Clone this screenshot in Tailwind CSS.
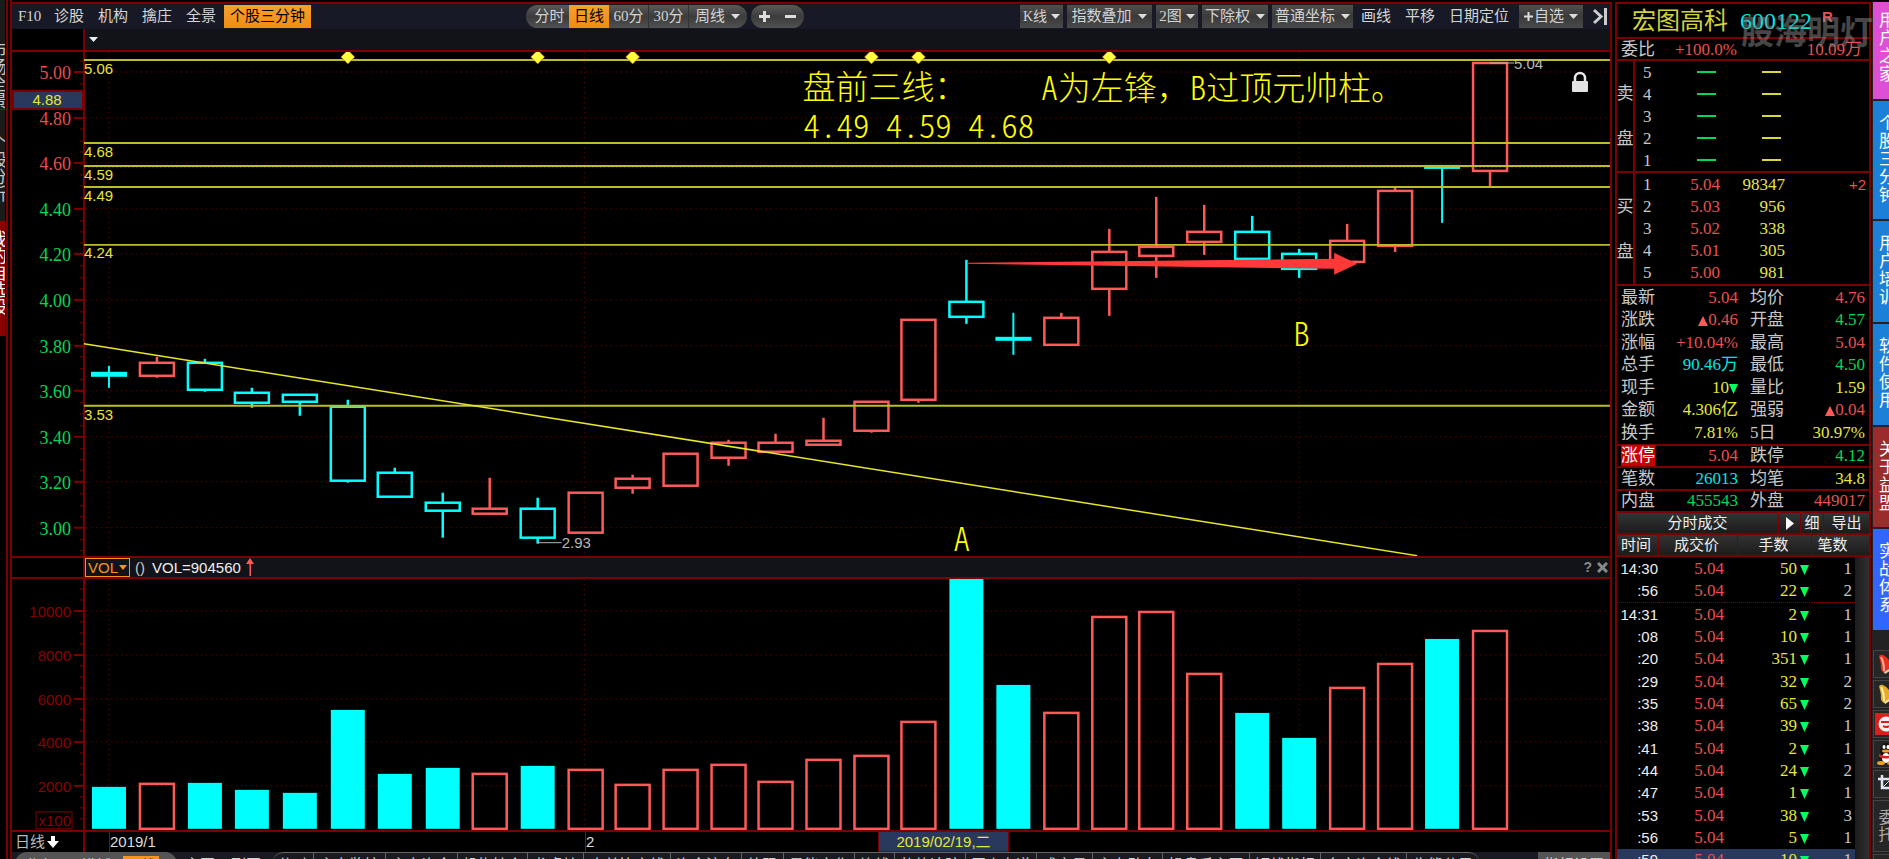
<!DOCTYPE html>
<html lang="zh-CN">
<head>
<meta charset="utf-8">
<title>宏图高科 600122</title>
<script src="https://cdn.jsdelivr.net/npm/@tailwindcss/browser@4"></script>
</head>
<body class="bg-black overflow-hidden">
<div class="flex h-screen overflow-hidden bg-black text-[15px] leading-none text-[#c8c8c8] font-['Liberation_Serif','Noto_Sans_CJK_SC',serif]">

  <!-- left navigation, scrolled mostly out of the window -->
  <nav class="flex w-3 shrink-0 flex-col border-r-2 border-[#7d0000] bg-black">
    <div class="flex h-full w-2 flex-col border-r-2 border-[#7d0000]">
      <a href="#" class="flex h-[110px] w-[5px] justify-end overflow-hidden border-b border-[#900000] bg-[#1b1b1b] pt-2 text-[17px] text-[#c8c8c8] [writing-mode:vertical-rl] items-start">市场全景</a>
      <a href="#" class="h-[112px] w-[5px] overflow-hidden border-b border-[#900000] bg-[#1b1b1b] pt-6 text-[17px] [writing-mode:vertical-rl]">个股分析</a>
      <a href="#" class="h-[114px] w-[5px] overflow-hidden bg-[#8a0000] pt-2 text-[17px] text-white [writing-mode:vertical-rl]">我的自选股</a>
    </div>
  </nav>

  <main class="flex min-w-0 flex-1 flex-col border-r-2 border-t-2 border-[#7d0000] mt-[2px]">
    <!-- toolbar -->
    <div class="flex h-[25px] shrink-0 items-center bg-[#171a26] text-[#d4d4d4]">
      <div class="flex items-center gap-[14px] pl-[6px]">
        <button class="w-[22px]">F10</button><button>诊股</button><button>机构</button><button>擒庄</button><button>全景</button>
        <button class="-ml-[6px] h-[23px] w-[87px] bg-linear-to-b from-[#f7a030] to-[#f08c10] text-black">个股三分钟</button>
      </div>
      <div class="ml-[215px] flex h-[23px] items-center overflow-hidden rounded-full bg-linear-to-b from-[#5a5a5a] via-[#3c3c3c] to-[#505050]">
        <button class="h-full w-[43px] pl-1">分时</button>
        <button class="h-full w-[40px] bg-linear-to-b from-[#f7a030] to-[#f08c10] text-black">日线</button>
        <button class="h-full w-[40px] border-r border-[#333]">60分</button>
        <button class="h-full w-[40px] border-r border-[#333]">30分</button>
        <button class="flex h-full w-[58px] items-center gap-[6px] pl-[6px]">周线<svg width="9" height="6"><path d="M0 0h9L4.500 5z" fill="#ddd"/></svg></button>
      </div>
      <div class="ml-1 flex h-[23px] w-[53px] items-center justify-around overflow-hidden rounded-full bg-linear-to-b from-[#5a5a5a] via-[#3c3c3c] to-[#505050]">
        <button aria-label="放大"><svg width="11" height="11"><path d="M5.500 0v11M0 5.500h11" stroke="#ddd" stroke-width="3"/></svg></button>
        <button aria-label="缩小"><svg width="11" height="11"><path d="M0 5.500h11" stroke="#ddd" stroke-width="3"/></svg></button>
      </div>
      <div class="ml-auto flex h-[23px] items-center gap-1 pr-[1px]">
        <button class="flex h-full w-[43px] items-center justify-center gap-1 bg-linear-to-b from-[#505050] via-[#3a3a3a] to-[#4a4a4a] text-[14px]">K线<svg width="9" height="6"><path d="M0 0h9L4.500 5z" fill="#ddd"/></svg></button>
        <button class="flex h-full w-[85px] items-center justify-center gap-[7px] bg-linear-to-b from-[#505050] via-[#3a3a3a] to-[#4a4a4a]">指数叠加<svg width="9" height="6"><path d="M0 0h9L4.500 5z" fill="#ddd"/></svg></button>
        <button class="flex h-full w-[42px] items-center justify-center gap-1 bg-linear-to-b from-[#505050] via-[#3a3a3a] to-[#4a4a4a]">2图<svg width="9" height="6"><path d="M0 0h9L4.500 5z" fill="#ddd"/></svg></button>
        <button class="flex h-full w-[66px] items-center justify-center gap-[6px] bg-linear-to-b from-[#505050] via-[#3a3a3a] to-[#4a4a4a]">下除权<svg width="9" height="6"><path d="M0 0h9L4.500 5z" fill="#ddd"/></svg></button>
        <button class="flex h-full w-[81px] items-center justify-center gap-[6px] bg-linear-to-b from-[#505050] via-[#3a3a3a] to-[#4a4a4a]">普通坐标<svg width="9" height="6"><path d="M0 0h9L4.500 5z" fill="#ddd"/></svg></button>
        <button class="ml-1">画线</button>
        <button class="ml-[10px]">平移</button>
        <button class="ml-[10px]">日期定位</button>
        <button class="ml-[6px] flex h-full w-[64px] items-center justify-center gap-[5px] bg-linear-to-b from-[#505050] via-[#3a3a3a] to-[#4a4a4a]"><span class="flex items-center gap-[1px]"><svg width="9" height="9"><path d="M4.500 0v9M0 4.500h9" stroke="#ddd" stroke-width="2"/></svg>自选</span><svg width="9" height="6"><path d="M0 0h9L4.500 5z" fill="#ddd"/></svg></button>
        <button class="ml-[6px]" aria-label="展开"><svg width="16" height="17"><path d="M1 2l7 6.500L1 15" fill="none" stroke="#ccc" stroke-width="3"/><path d="M12.500 0v17" stroke="#ccc" stroke-width="3"/></svg></button>
      </div>
    </div>
    <div class="flex h-[23px] shrink-0 border-b-2 border-[#7d0000]">
      <div class="w-[73px] border-r-2 border-[#7d0000]"></div>
      <button class="flex flex-1 items-center bg-[#121318] pl-[4px]" aria-label="指标菜单"><svg width="9" height="5"><path d="M0 0h9L4.500 5z" fill="#eee"/></svg></button>
    </div>

    <svg id="price" viewBox="12 52 1599 504" class="block w-full shrink-0"></svg>

    <!-- volume header -->
    <div class="flex h-[23px] shrink-0 border-y-2 border-[#7d0000] font-['Liberation_Sans',sans-serif]">
      <div class="w-[73px] border-r-2 border-[#7d0000]"></div>
      <div class="flex flex-1 items-center bg-[#121318]">
        <button class="flex h-[19px] w-[45px] items-center justify-center border border-[#f7941d] text-[#f7941d]">VOL<svg width="8" height="5" class="ml-[1px]"><path d="M0 0h8L4 5z" fill="#f7941d"/></svg></button>
        <span class="ml-[5px]">()</span>
        <span class="ml-[7px] text-[#eee]">VOL=904560</span>
        <svg width="8" height="18" class="ml-[5px]"><path d="M4 0L8 6H5V18H3.500V6H0z" fill="#ff5a5a"/></svg>
        <span class="ml-auto text-[14px] font-bold text-[#888]">?</span>
        <button class="ml-[5px] mr-[2px]" aria-label="关闭"><svg width="11" height="11"><path d="M1 1l9 9M10 1l-9 9" stroke="#888" stroke-width="3"/></svg></button>
      </div>
    </div>

    <svg id="volume" viewBox="12 579 1599 251" class="block w-full shrink-0"></svg>

    <!-- date axis -->
    <div class="flex h-[22px] shrink-0 border-t-2 border-[#7d0000] font-['Liberation_Sans','Noto_Sans_CJK_SC',sans-serif] text-[#ddd]">
      <button class="flex w-[73px] items-center border-r-2 border-[#7d0000] pl-[3px] text-[#bbb]">日线<svg width="12" height="12" class="ml-[2px]"><path d="M4 0h4v5h4L6 12 0 5h4z" fill="#fff"/></svg></button>
      <div class="w-[24px]"></div>
      <div class="flex w-[476px] items-center border-l border-[#a00000]">2019/1</div>
      <div class="flex w-[293px] items-center border-l border-[#a00000]">2</div>
      <div class="flex w-[131px] items-center justify-center border border-t-0 border-[#7d0000] bg-[#29395d] text-[#e6e63c]">2019/02/19,二</div>
    </div>
    <div class="flex h-[24px] shrink-0 bg-[#191a22] pl-[3px] text-[15px] text-[#d0d0d0]" id="tabs">
      <div class="flex overflow-hidden rounded-t-xl bg-[#555] pt-[4px]">
        <button class="h-[22px] w-[54px]">指标</button><button class="h-[22px] w-[54px]">模板</button><button class="h-[22px] w-[36px] bg-[#f7941d] text-black">日线</button><span class="w-[18px]"></span>
      </div>
      <button class="w-[46px] pt-[4px]">主图</button><button class="w-[46px] pt-[4px]">副图</button>
    </div>
  </main>

  <!-- quote panel -->
  <aside class="relative ml-[3px] mt-[2px] flex w-[256px] shrink-0 flex-col border-2 border-b-0 border-[#7d0000] text-[17px]">
    <header class="flex h-[33px] shrink-0 items-center pl-[15px] text-[24px]">
      <h1 class="text-[#d2d23a]">宏图高科</h1>
      <span class="ml-[12px] text-[#00e5e5]">600122</span>
      <span class="mb-2 ml-[10px] font-['Liberation_Sans',sans-serif] text-[15px] font-bold text-[#e85050]">R</span>
    </header>
    <div class="flex h-[24px] shrink-0 items-center border-y-2 border-[#7d0000] pl-[4px] pr-[7px]">
      <span>委比</span><span class="w-[82px] text-right text-[#e85050]">+100.0%</span><span class="ml-auto text-[#e85050]">10.09万</span>
    </div>
    <div class="pointer-events-none absolute right-[-4px] top-[13px] text-[33px] font-bold text-[#8c8c8c]/50">股海明灯</div>

    <section class="flex h-[110px] shrink-0">
      <div class="flex w-[18px] flex-col items-center justify-center gap-[28px] border-r-2 border-[#7d0000]"><span>卖</span><span>盘</span></div>
      <div id="sell" class="grid flex-1 auto-rows-fr"></div>
    </section>
    <section class="flex h-[115px] shrink-0 border-y-2 border-[#7d0000]">
      <div class="flex w-[18px] flex-col items-center justify-center gap-[28px] border-r-2 border-[#7d0000]"><span>买</span><span>盘</span></div>
      <div id="buy" class="grid flex-1 auto-rows-fr"></div>
    </section>
    <section id="stats" class="grid h-[225px] shrink-0 auto-rows-fr"></section>

    <div class="flex h-[24px] shrink-0 border-y-2 border-[#7d0000] bg-linear-to-b from-[#333] to-[#1c1c1c] text-[15px] text-[#eee]">
      <h2 class="flex flex-1 items-center justify-center">分时成交</h2>
      <button class="flex w-[22px] items-center justify-center border-l border-[#7d0000]" aria-label="播放"><svg width="8" height="13"><path d="M0 0l8 6.500L0 13z" fill="#fff"/></svg></button>
      <button class="w-[23px] border-l border-[#7d0000]">细</button>
      <button class="w-[46px] border-l border-[#7d0000]">导出</button>
    </div>
    <div class="flex h-[22px] shrink-0 border-b-2 border-[#7d0000] bg-linear-to-b from-[#333] to-[#1c1c1c] text-[15px] text-[#eee]">
      <button class="w-[42px] border-r border-[#7d0000] pr-[3px]">时间</button>
      <button class="w-[79px] border-r border-[#7d0000] pr-[3px]">成交价</button>
      <button class="w-[74px] border-r border-[#7d0000] pr-[2px]">手数</button>
      <button class="flex-1 pr-[16px]">笔数</button>
    </div>
    <div class="flex h-[314px] shrink-0">
      <table class="h-[314px] w-[238px] table-fixed border-collapse text-right">
        <colgroup><col class="w-[41px]"><col class="w-[66px]"><col class="w-[88px]"><col></colgroup>
        <tbody id="ticks"></tbody>
      </table>
      <div class="flex-1 bg-linear-to-r from-[#1c1c1c] to-[#303030]"></div>
    </div>
  </aside>

  <!-- right shortcuts, cut off by the window's edge -->
  <nav class="ml-[1px] mt-[2px] flex w-[17px] shrink-0 flex-col overflow-hidden bg-[#222] pl-[1px]">
    <a href="#" class="flex h-[97px] w-8 shrink-0 items-start overflow-hidden bg-[#dd4fd5] pl-[6px] pt-[10px] text-[17px] leading-[18px] text-white"><span class="w-[18px] break-all">用户之家</span></a>
    <a href="#" class="mt-[2px] flex h-[118px] w-8 shrink-0 items-start overflow-hidden bg-[#1c80d8] pl-[6px] pt-[14px] text-[17px] leading-[18px] text-white"><span class="w-[18px] break-all">个股三分钟</span></a>
    <a href="#" class="mt-[2px] flex h-[101px] w-8 shrink-0 items-start overflow-hidden bg-[#1c80d8] pl-[6px] pt-[14px] text-[17px] leading-[18px] text-white"><span class="w-[18px] break-all">用户培训</span></a>
    <a href="#" class="mt-[2px] flex h-[101px] w-8 shrink-0 items-start overflow-hidden bg-[#1c80d8] pl-[6px] pt-[14px] text-[17px] leading-[18px] text-white"><span class="w-[18px] break-all">软件使用</span></a>
    <a href="#" class="mt-[2px] flex h-[100px] w-8 shrink-0 items-start overflow-hidden bg-[#9a2c2c] pl-[6px] pt-[14px] text-[17px] leading-[18px] text-white"><span class="w-[18px] break-all">关于益盟</span></a>
    <a href="#" class="mt-[2px] flex h-[101px] w-8 shrink-0 items-start overflow-hidden bg-[#3366ff] pl-[6px] pt-[14px] text-[17px] leading-[18px] text-white"><span class="w-[18px] break-all">实战体系</span></a>
    <div class="mt-[20px] flex flex-col gap-[2px]">
      <button class="h-[28px] w-8 border border-[#444] bg-[#262626] pl-[3px]" aria-label="预警"><svg width="24" height="22"><path d="M2 3Q4 1 6 2Q13 5 15 15L7 20Q3 18 4 12Z" fill="#e8321e"/><path d="M4 4Q7 9 7 18" stroke="#ffb0a0" stroke-width="2" fill="none"/><path d="M7 19L15 14l1 2-8 5z" fill="#e9c9b0"/></svg></button>
      <button class="h-[28px] w-8 border border-[#444] bg-[#262626] pl-[3px]" aria-label="提醒"><svg width="24" height="22"><path d="M2 3Q4 1 6 2Q13 5 15 15L7 20Q3 18 4 12Z" fill="#e5ac28"/><path d="M4 4Q7 9 7 18" stroke="#fff0b0" stroke-width="2" fill="none"/><path d="M7 19L15 14l1 2-8 5z" fill="#f5e0a0"/></svg></button>
      <button class="h-[28px] w-8 border border-[#444] bg-[#262626] pl-[1px]" aria-label="客服"><svg width="26" height="22"><rect width="26" height="22" fill="#d8201c"/><circle cx="11" cy="11" r="7.500" fill="#f4f0f0"/><path d="M6 9h10M8 13q3 2 6 0" stroke="#d8201c" stroke-width="2" fill="none"/></svg></button>
      <button class="h-[28px] w-8 border border-[#444] bg-[#262626] pl-[3px]" aria-label="QQ"><svg width="24" height="24"><ellipse cx="9" cy="8" rx="6" ry="7" fill="#151515"/><ellipse cx="9" cy="16" rx="7" ry="6" fill="#151515"/><ellipse cx="9" cy="16" rx="4" ry="5" fill="#fff"/><ellipse cx="7" cy="5" rx="1.500" ry="2" fill="#fff"/><ellipse cx="11" cy="5" rx="1.500" ry="2" fill="#fff"/><ellipse cx="9" cy="9" rx="4" ry="1.500" fill="#f0a020"/><path d="M2 12q7 4 14 0v3q-7 3-14 0z" fill="#e02020"/><ellipse cx="4" cy="21" rx="4" ry="2" fill="#f0a020"/><ellipse cx="14" cy="21" rx="4" ry="2" fill="#f0a020"/></svg></button>
      <button class="h-[28px] w-8 border border-[#444] bg-[#262626] pl-[3px]" aria-label="截图"><svg width="24" height="20"><path d="M5 1v13h12M1 5h13v13" fill="none" stroke="#dde6f2" stroke-width="2.500"/><path d="M6 13l10-10" stroke="#dde6f2"/></svg></button>
      <button class="flex h-[52px] w-8 items-center border border-[#444] bg-[#262626] pl-[4px] text-[16px] leading-[17px] text-[#aaa]"><span class="w-[17px] break-all">委托</span></button>
      <button class="h-[28px] w-8 border border-[#444] bg-[#262626]" aria-label="更多"></button>
    </div>
  </nav>
</div>

<script>
const UP = '#ff5a5a', DOWN = '#00ffff', LINE = '#7d0000', GRID = '#5c0000';
const SANS = 'Liberation Sans, sans-serif', SERIF = 'Liberation Serif, serif', CJK = 'Noto Sans CJK SC, sans-serif';
const cx = i => Math.round(109.3 + 47.64 * i);
const line = (x1, y1, x2, y2, c, w, extra) => `<line x1="${x1}" y1="${y1}" x2="${x2}" y2="${y2}" stroke="${c}" stroke-width="${w || 1}" ${extra || ''}/>`;
const text = (x, y, s, c, size, font, extra) => `<text x="${x}" y="${y}" fill="${c}" font-size="${size}" font-family="${font}" ${extra || ''}>${s}</text>`;
const dots = 'stroke-dasharray="1.500 3.500"';

// direction, body top, body bottom, high, low
const candles = [
 ['f',372,377,366,388],['u',363,376,357,378],['d',363,390,359,392],['d',393,403,388,408],['d',395,402,395,416],['d',407,481,400,483],
 ['d',473,497,468,497],['d',503,511,493,538],['u',509,514,478,515],['d',509,538,498,544],['u',493,533,493,533],['u',479,488,475,494],
 ['u',454,486,454,486],['u',443,458,440,466],['u',443,452,434,452],['u',441,445,418,445],['u',402,431,402,433],['u',320,400,320,403],
 ['d',302,317,260,324],['f',337,341,313,355],['u',318,345,313,345],['u',252,289,229,316],['u',247,256,197,278],['u',232,242,205,255],
 ['d',232,259,216,259],['d',254,269,249,278],['u',241,262,224,262],['u',191,246,187,252],['f',165,169,165,223],['u',63,171,63,187]];
const volTops = [787,784,783,790,793,710,774,768,774,766,770,785,770,765,782,760,756,722,579,685,713,617,612,674,713,738,688,664,639,631];

let s = '';
[109, 585, 1300].forEach(x => s += line(x, 52, x, 556, GRID, 1, dots));
for (let k = 0; k <= 10; k++) {
  const y = Math.round(72 + 45.6 * k), p = (5 - 0.2 * k).toFixed(2);
  s += line(86, y, 1611, y, GRID, 1, dots) + line(74, y, 84, y, LINE, 2);
  s += text(71, y + 7, p, k < 3 ? '#e84c4c' : '#00d858', 18, SERIF, 'text-anchor="end"');
}
for (let y = 61; y < 556; y += 11.4) s += line(80, Math.round(y), 84, Math.round(y), LINE, 1);
s += line(84, 52, 84, 556, LINE, 2);
s += line(84, 167, 1611, 167, '#b02020', 1, 'stroke-dasharray="2 2"');
s += `<rect x="13" y="91" width="70" height="18" fill="#29395d" stroke="${LINE}" stroke-width="2"/>` + text(47, 105, '4.88', '#e6e63c', 15, SANS, 'text-anchor="middle"');
candles.forEach(([t, a, b, h, l], i) => {
  const x = cx(i), c = t === 'u' ? UP : DOWN;
  if (t === 'f') s += `<rect x="${x - 18}" y="${a}" width="36" height="${b - a}" fill="${c}"/>` + line(x, h, x, l, c, 2);
  else s += line(x, h, x, a, c, 2.5) + line(x, b, x, l, c, 2.5) + `<rect x="${x - 17}" y="${a}" width="34" height="${b - a}" fill="none" stroke="${c}" stroke-width="2.5"/>`;
});
[[60,'5.06',74],[143,'4.68',157],[166,'4.59',180],[187,'4.49',201],[245,'4.24',258],[406,'3.53',420]].forEach(([y, t, b]) =>
  s += line(84, y, 1611, y, '#bdbd2a', 2) + text(84, b, t, '#e6e63c', 15, SANS));
s += line(84, 344, 1418, 556, '#e6e630', 1.5);
[5, 9, 11, 16, 17, 21].forEach(i => { const x = cx(i); s += `<path d="M${x} 50L${x + 7} 57L${x} 64L${x - 7} 57Z" fill="#ffff3c" stroke="#a03000" stroke-width="0.5"/>`; });
s += '<path d="M968 263L1335 259V253L1358 264L1335 275V269L968 264Z" fill="#ff3838"/>';
s += line(538, 543, 562, 543, '#b8b8b8', 1) + text(562, 548, '2.93', '#b8b8b8', 15, SANS);
s += line(1491, 63, 1515, 63, '#b8b8b8', 1) + text(1515, 69, '5.04', '#b8b8b8', 15, SANS);
const light = 'font-weight="300"', half = c => `<tspan style="font-feature-settings:'hwid'">${c}</tspan>`;
s += text(803, 99, '盘前三线：', '#ffff00', 33, CJK, light);
s += text(1042, 100, half('A') + '为左锋，' + half('B') + '过顶元帅柱。', '#ffff00', 33, CJK, light);
s += text(804, 138, half('4.49 4.59 4.68'), '#ffff00', 33, CJK, light);
s += text(954, 551, half('A'), '#ffff00', 33, CJK, light) + text(1294, 346, half('B'), '#ffff00', 33, CJK, light);
s += '<path d="M1576 82v-4a5 5 0 0 1 10 0v4" fill="none" stroke="#e8e8e8" stroke-width="2.5"/><rect x="1573" y="81" width="16" height="11" rx="1" fill="#e4e4e4"/>';
document.getElementById('price').innerHTML = s;

s = '';
[109, 585, 1300].forEach(x => s += line(x, 579, x, 830, GRID, 1, dots));
[10000, 8000, 6000, 4000, 2000].forEach((v, k) => {
  const y = Math.round(611 + 43.8 * k);
  s += line(86, y, 1611, y, GRID, 1, dots) + line(74, y, 84, y, LINE, 2) + text(71, y + 6, v, '#8b0000', 15, SANS, 'text-anchor="end"');
});
for (let y = 589; y < 828; y += 10.95) s += line(80, Math.round(y), 84, Math.round(y), LINE, 1);
s += line(84, 579, 84, 830, LINE, 2);
s += `<rect x="36" y="812" width="36" height="17" fill="none" stroke="${LINE}"/>` + text(71, 826, 'x100', '#8b0000', 15, SANS, 'text-anchor="end"');
volTops.forEach((y, i) => {
  const x = cx(i);
  s += candles[i][0] === 'u' ? `<rect x="${x - 17}" y="${y}" width="34" height="${829 - y}" fill="none" stroke="${UP}" stroke-width="2.5"/>`
                             : `<rect x="${x - 17}" y="${y}" width="34" height="${829 - y}" fill="${DOWN}"/>`;
});
document.getElementById('volume').innerHTML = s;

document.getElementById('tabs').insertAdjacentHTML('beforeend',
  '<div class="flex overflow-hidden rounded-t-xl border-t border-[#666] ml-[3px]">' +
  [[42,'分时'],[72,'主力监控'],[72,'主力资金'],[70,'机构持仓'],[56,'龙虎榜'],[87,'大单比率线'],[71,'资金流向'],[42,'筹码'],[71,'量能变化'],[40,'均线'],[71,'趋势追踪'],[71,'买卖力道'],[56,'成交量'],[70,'主力动向'],[87,'操盘手主图'],[71,'短线指标'],[86,'多空资金线'],[73,'牛熊分界']]
  .map(([w, t]) => `<button class="shrink-0 border-r border-[#666] pt-[3px]" style="width:${w}px">${t}</button>`).join('') +
  '</div><button class="ml-auto w-[72px] bg-[#555] pt-[4px]">指标设置</button>');

const dash = c => `<i class="ml-auto block h-[2px] w-[19px] ${c}"></i>`;
document.getElementById('sell').innerHTML = [5, 4, 3, 2, 1].map(n =>
  `<div class="flex items-center pl-[8px]"><span class="w-[9px]">${n}</span><span class="w-[64px]">${dash('bg-[#00d858]')}</span><span class="w-[65px]">${dash('bg-[#d8d83a]')}</span></div>`).join('');
document.getElementById('buy').innerHTML = [['5.04','98347'],['5.03','956'],['5.02','338'],['5.01','305'],['5.00','981']].map(([p, q], i) =>
  `<div class="flex items-center pl-[8px]"><span class="w-[9px]">${i + 1}</span><span class="w-[68px] text-right text-[#e85050]">${p}</span><span class="w-[65px] text-right text-[#e6e63c]">${q}</span>${i ? '' : '<span class="ml-auto pr-[3px] font-[\'Liberation_Sans\',sans-serif] text-[15px] text-[#e85050]">+2</span>'}</div>`).join('');

const C = { r: 'text-[#e85050]', g: 'text-[#00d858]', y: 'text-[#e6e63c]', c: 'text-[#00e5e5]' };
const up = '<svg width="10" height="10" class="inline-block"><path d="M5 0l5 10H0z" fill="#ff5a5a"/></svg>';
const dn = '<svg width="9" height="10" class="inline-block"><path d="M0 0h9L4.500 10z" fill="#00ff60"/></svg>';
document.getElementById('stats').innerHTML = [
 ['最新','5.04','r','均价','4.76','r'],['涨跌',up+'0.46','r','开盘','4.57','g'],['涨幅','+10.04%','r','最高','5.04','r'],['总手','90.46万','c','最低','4.50','g'],
 ['现手','10'+dn,'y','量比','1.59','y'],['金额','4.306亿','y','强弱',up+'0.04','r'],['换手','7.81%','y','5日','30.97%','y'],
 ['涨停','5.04','r','跌停','4.12','g'],['笔数','26013','c','均笔','34.8','y'],['内盘','455543','g','外盘','449017','r']].map((r, i) =>
 `<div class="flex items-center pl-[4px] pr-[4px] ${i > 6 ? 'border-t-2 border-[#7d0000]' : ''}"><span class="${i === 7 ? 'bg-[#c80000] py-[2px] text-white' : ''}">${r[0]}</span><span class="flex-1 text-right ${C[r[2]]}">${r[1]}</span><span class="ml-[12px] w-[34px]">${r[3]}</span><span class="w-[81px] text-right ${C[r[5]]}">${r[4]}</span></div>`).join('');

document.getElementById('ticks').innerHTML = [['14:30',50,1],[':56',22,2],['14:31',2,1],[':08',10,1],[':20',351,1],[':29',32,2],[':35',65,2],[':38',39,1],[':41',2,1],[':44',24,2],[':47',1,1],[':53',38,3],[':56',5,1],[':59',10,1]].map(([t, q, n], i) =>
 `<tr class="${i === 13 ? 'bg-[#29395d]' : ''} ${i === 1 ? 'border-b border-dotted border-[#7d0000]' : ''}"><td class="font-['Liberation_Sans',sans-serif] text-[15px] text-[#eee]">${t}</td><td class="text-[#e85050]">5.04</td><td class="pr-[3px] text-[#e6e63c]">${q}<svg width="9" height="10" class="ml-[3px] inline-block"><path d="M0 0h9L4.500 10z" fill="#00ff60"/></svg></td><td class="pr-[3px]">${n}</td></tr>`).join('');
</script>
</body>
</html>
